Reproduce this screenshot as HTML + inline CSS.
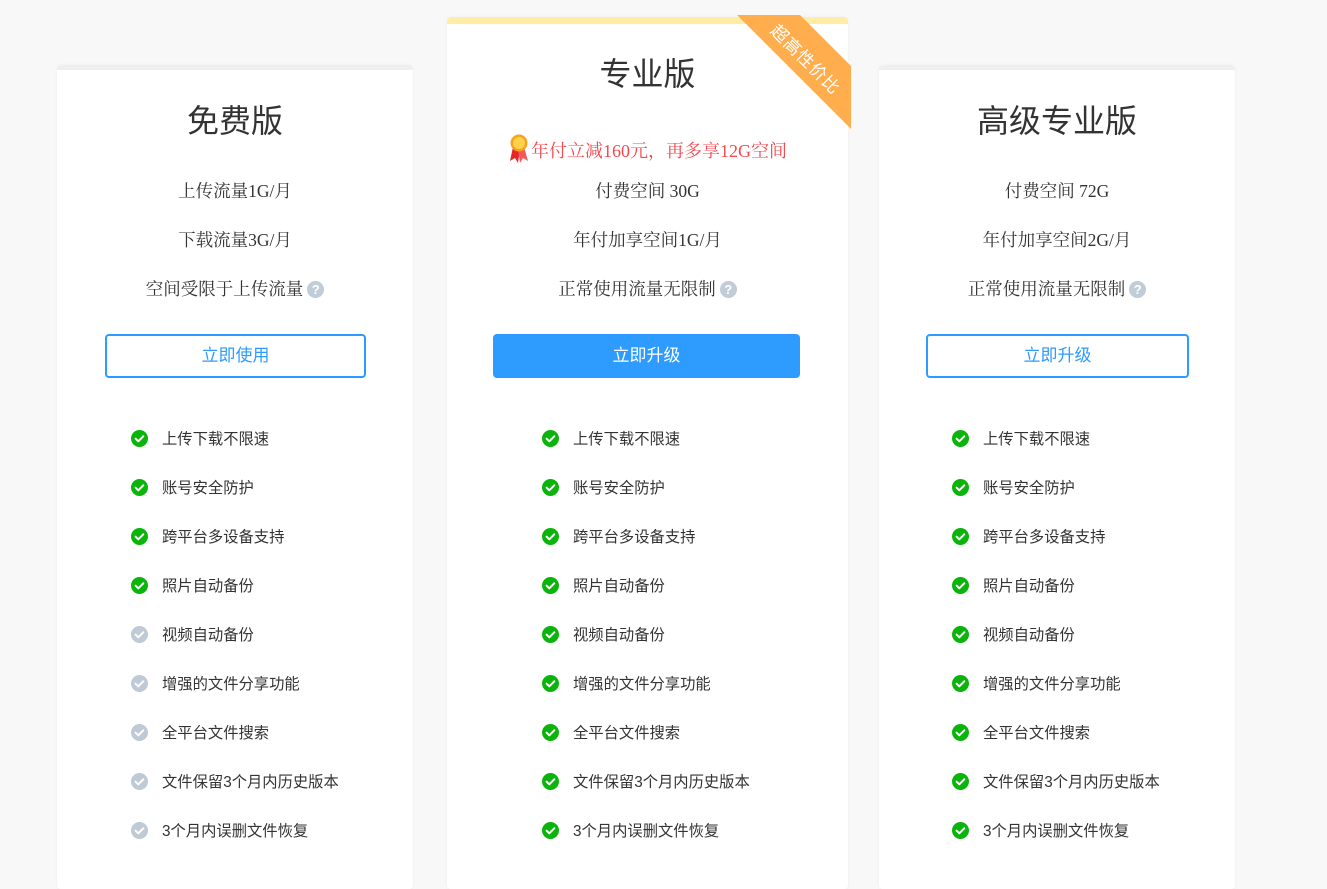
<!DOCTYPE html>
<html><head><meta charset="utf-8">
<style>
body{margin:0;width:1327px;height:879px;background:#f8f8f8;overflow:hidden;position:relative;font-family:"Liberation Sans","Noto Sans CJK SC",sans-serif;color:#333}
.card{position:absolute;background:#fff;bottom:-10px;border-radius:4px;box-shadow:0 0 3px rgba(0,0,0,0.04)}
.card .top{position:absolute;left:0;right:0;top:0;height:5px;background:#efefef;border-radius:4px 4px 0 0}
.t{position:absolute;left:0;right:0;text-align:center;white-space:nowrap}
.title{font-size:32px;color:#333}
.f{font-family:"Liberation Serif","Noto Serif CJK SC",serif;font-size:17.5px;color:#333}
.q{display:inline-block;width:17px;height:17px;border-radius:50%;background:#c0ccd8;color:#fff;font:bold 13px/17px "Liberation Sans",sans-serif;text-align:center;vertical-align:1px;margin-left:4px}
.btn{position:absolute;height:40px;border:2px solid #2d9bff;border-radius:4px;color:#2d9bff;font-size:17px;line-height:40px;text-align:center;box-sizing:content-box}
.btn.fill{background:#2d9bff;color:#fff}
.li{position:absolute;font-size:15.3px;color:#333;white-space:nowrap}
.ck{position:absolute;width:17px;height:17px;border-radius:50%;background:#0bb40b}
.ck.g{background:#bfcad6}
.ck svg{position:absolute;left:0;top:0}
</style></head><body>

<div class="card" style="left:57px;top:65px;width:356px"><div class="top"></div></div>
<div class="card" style="left:447px;top:17px;width:401px"><div class="top" style="background:#ffeda5;height:7px"></div></div>
<div class="card" style="left:879px;top:65px;width:356px"><div class="top"></div></div>
<div style="position:absolute;left:737px;top:15px;width:114px;height:114px;background:#ffad4d;clip-path:polygon(0 0,63px 0,114px 51px,114px 114px)">
 <div style="position:absolute;left:8px;top:27px;width:120px;height:36px;transform:rotate(45deg);color:#fff;font-size:17px;line-height:36px;text-align:center;letter-spacing:1px">超高性价比</div>
</div>

<div id="c"></div>
<script>
var cols=[
 {x:57,w:356,title:"免费版",ty:96,rows:["上传流量1G/月","下载流量3G/月","空间受限于上传流量"],btn:"立即使用",bx:105,bw:257,fill:false,ix:131,grey:4},
 {x:447,w:401,title:"专业版",ty:49,rows:["付费空间 30G","年付加享空间1G/月","正常使用流量无限制"],btn:"立即升级",bx:493,bw:303,fill:true,ix:542,grey:99},
 {x:879,w:356,title:"高级专业版",ty:96,rows:["付费空间 72G","年付加享空间2G/月","正常使用流量无限制"],btn:"立即升级",bx:926,bw:259,fill:false,ix:952,grey:99}
];
var feats=["上传下载不限速","账号安全防护","跨平台多设备支持","照片自动备份","视频自动备份","增强的文件分享功能","全平台文件搜索","文件保留3个月内历史版本","3个月内误删文件恢复"];
var h="";
cols.forEach(function(c){
 h+='<div class="t title" style="left:'+c.x+'px;width:'+c.w+'px;top:'+c.ty+'px">'+c.title+'</div>';
 c.rows.forEach(function(r,i){
  h+='<div class="t f" style="left:'+c.x+'px;width:'+c.w+'px;top:'+(178+i*49)+'px">'+r+(i==2?'<span class="q">?</span>':'')+'</div>';
 });
 h+='<div class="btn'+(c.fill?' fill':'')+'" style="left:'+c.bx+'px;top:334px;width:'+c.bw+'px">'+c.btn+'</div>';
 feats.forEach(function(f,i){
  var y=438+i*49;
  h+='<div class="ck'+(i>=c.grey?' g':'')+'" style="left:'+c.ix+'px;top:'+(y-8)+'px"><svg width="17" height="17" viewBox="0 0 17 17"><path d="M4.6 8.7l2.7 2.6 5-5" fill="none" stroke="#fff" stroke-width="2" stroke-linecap="round" stroke-linejoin="round"/></svg></div>';
  h+='<div class="li" style="left:'+(c.ix+31)+'px;top:'+(y-11)+'px">'+f+'</div>';
 });
});
h+='<div class="t" style="left:447px;width:401px;top:133px;font-family:\'Liberation Serif\',\'Noto Serif CJK SC\',serif;font-size:18px;color:#f5484f">'+
 '<svg width="22" height="32" viewBox="0 0 22 32" style="vertical-align:-8px;margin-right:1px"><path d="M5 14 L2 28 L7 25 L10 30 L12 16Z" fill="#e8262a"/><path d="M16 14 L20 28 L15 25 L12 30 L10 16Z" fill="#f15a5a"/><circle cx="11" cy="10" r="8.5" fill="#f7a21b"/><circle cx="11" cy="10" r="6" fill="#ffd24a"/></svg>年付立减160元，再多享12G空间</div>';
document.getElementById("c").innerHTML=h;
</script>
</body></html>
